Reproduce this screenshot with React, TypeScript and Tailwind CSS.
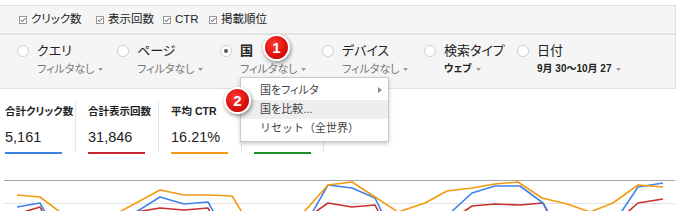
import React from 'react';

type Dim = { label: string; sub: string; width: string; selected?: boolean; strong?: boolean };

const DIMENSIONS: Dim[] = [
  { label: 'クエリ', sub: 'フィルタなし', width: 'w-[100px]' },
  { label: 'ページ', sub: 'フィルタなし', width: 'w-[103px]' },
  { label: '国', sub: 'フィルタなし', width: 'w-[102px]', selected: true },
  { label: 'デバイス', sub: 'フィルタなし', width: 'w-[102px]' },
  { label: '検索タイプ', sub: 'ウェブ', width: 'w-[93px]', strong: true },
  { label: '日付', sub: '9月 30～10月 27', width: 'w-[120px]', strong: true },
];

const METRICS = [
  { label: 'クリック数', width: 'w-[77px]' },
  { label: '表示回数', width: 'w-[67px]' },
  { label: 'CTR', width: 'w-[46px]' },
  { label: '掲載順位', width: '' },
];

// the 4th card sits under the open menu, so its texts are not drawn
const CARDS = [
  { title: '合計クリック数', value: '5,161', bar: 'bg-[#3e82e4]' },
  { title: '合計表示回数', value: '31,846', bar: 'bg-[#c5282f]' },
  { title: '平均 CTR', value: '16.21%', bar: 'bg-[#f29a10]' },
  { title: '', value: '', bar: 'bg-[#1b8d24]' },
];

// chart series, in page coordinates (viewBox starts at y=170)
const SERIES = [
  {
    stroke: '#c8312f',
    points: [
      [17, 214], [40, 207], [64, 250], [136, 212], [160, 208], [184, 210], [208, 208], [232, 250],
      [304, 220], [328, 203], [352, 207], [375, 205], [398, 250], [449, 222], [472, 206], [495, 204],
      [520, 205], [543, 203], [567, 250], [614, 224], [638, 203], [663, 199],
    ],
  },
  {
    stroke: '#3e84ea',
    points: [
      [17, 207], [40, 203], [64, 245], [136, 212], [160, 197], [184, 204], [208, 202], [232, 245],
      [304, 227], [328, 185], [352, 188], [375, 198], [398, 245], [449, 214], [472, 193], [495, 186],
      [520, 186], [543, 203], [567, 245], [614, 223], [638, 187], [663, 183],
    ],
  },
  {
    stroke: '#f29a10',
    points: [
      [17, 195], [40, 197], [64, 215], [88, 232], [112, 216], [160, 190], [184, 195], [208, 195],
      [232, 196], [256, 235], [304, 212], [328, 185], [352, 182], [375, 197], [398, 212], [425, 203],
      [447, 191], [472, 188], [495, 184], [518, 182], [542, 198], [567, 204], [590, 212], [613, 203],
      [638, 185], [663, 187],
    ],
  },
];

const Caret = () => (
  <svg width="5" height="3" viewBox="0 0 5 3" className="ml-[4px] mt-[1px]">
    <path d="M0 0h5L2.5 3z" fill="#9a9a9a" />
  </svg>
);

const CheckBox = () => (
  <svg width="8" height="8" viewBox="0 0 8 8" className="shrink-0">
    <rect x="0.5" y="0.5" width="7" height="7" fill="#fff" stroke="#999" />
    <path d="M1.8 4l1.5 1.5L6.4 2.2" fill="none" stroke="#444" strokeWidth="1" />
  </svg>
);

const Radio: React.FC<{ on?: boolean }> = ({ on }) => (
  <span className="mt-[2px] w-[12px] h-[12px] shrink-0 rounded-full border border-[#cfcfcf] bg-white flex items-center justify-center">
    {on && <span className="w-[4px] h-[4px] rounded-full bg-[#555]" />}
  </span>
);

const Badge: React.FC<{ n: string; className: string }> = ({ n, className }) => (
  <div
    className={`absolute w-[27px] h-[27px] rounded-full border-2 border-white bg-[radial-gradient(circle_at_40%_35%,#ff3b2f,#d90f0f_60%,#b80606)] shadow-[1px_2px_4px_rgba(0,0,0,0.45)] flex items-center justify-center text-white text-[15px] font-bold leading-none ${className}`}
  >
    {n}
  </div>
);

export default function App() {
  return (
    <div className="relative w-[680px] h-[211px] overflow-hidden bg-white text-[#222] font-['Liberation_Sans','Noto_Sans_CJK_JP',sans-serif] [font-feature-settings:'palt']">
      <div className="h-[5px]" />

      {/* filter panel */}
      <div className="w-[676px] bg-[#f5f5f5] border-t border-b border-r border-[#e0e0e0]">
        <div className="h-[27px] flex items-center pl-[19px]">
          {METRICS.map((m) => (
            <label
              key={m.label}
              className={`${m.width} flex items-center gap-[4px] whitespace-nowrap text-[11.5px] leading-none text-[#222]`}
            >
              <CheckBox />
              {m.label}
            </label>
          ))}
        </div>
        <div className="h-[2px] bg-[#e4e4e4]" />
        <div className="h-[53px] flex pl-[17px] pt-[8px]">
          {DIMENSIONS.map((d) => (
            <div key={d.label} className={`${d.width} flex items-start gap-[8px]`}>
              <Radio on={d.selected} />
              <div>
                <div className={`text-[13px] leading-[16px] ${d.selected ? 'font-bold' : ''}`}>{d.label}</div>
                <div
                  className={`mt-[3px] flex items-center whitespace-nowrap leading-[14px] ${
                    d.strong ? 'text-[10px] font-bold text-[#222]' : 'text-[11px] text-[#777]'
                  }`}
                >
                  {d.sub}
                  <Caret />
                </div>
              </div>
            </div>
          ))}
        </div>
      </div>

      {/* summary cards */}
      <div className="mt-[13px] h-[50px] flex">
        {CARDS.map((c, i) => (
          <div
            key={i}
            className={
              i === 0
                ? 'w-[75px] pl-[5px] pt-[2px]'
                : `w-[83px] pl-[12px] pt-[2px] border-l border-[#e6e6e6] ${i === CARDS.length - 1 ? 'border-r' : ''}`
            }
          >
            <div className="h-[14px] text-[10.5px] font-bold leading-[14px] whitespace-nowrap">{c.title}</div>
            <div className="mt-[10px] h-[18px] text-[14.5px] leading-[18px]">{c.value}</div>
            <div className={`mt-[6px] w-[57px] h-[2px] ${c.bar}`} />
          </div>
        ))}
      </div>

      {/* chart */}
      <svg className="mt-[18px] block" width="680" height="60" viewBox="0 170 680 60">
        <line x1="4" y1="180.5" x2="675" y2="180.5" stroke="#a6a6a6" strokeWidth="1" />
        <line x1="4" y1="203.5" x2="675" y2="203.5" stroke="#e3e3e3" strokeWidth="1" />
        {SERIES.map((s) => (
          <polyline
            key={s.stroke}
            points={s.points.map((p) => p.join(',')).join(' ')}
            fill="none"
            stroke={s.stroke}
            strokeWidth="1.6"
            strokeLinejoin="round"
          />
        ))}
      </svg>

      {/* country menu */}
      <div className="absolute left-[240px] top-[77px] w-[149px] bg-white border border-[#cacaca] shadow-[0_2px_4px_rgba(0,0,0,0.2)] pt-[2px] pb-[3px] text-[11px] text-[#444]">
        <div className="h-[20px] pl-[19px] pr-[6px] flex items-center justify-between">
          国をフィルタ
          <svg width="4" height="6" viewBox="0 0 4 6">
            <path d="M0 0l4 3-4 3z" fill="#888" />
          </svg>
        </div>
        <div className="h-[19px] pl-[19px] flex items-center bg-[#eeeeee]">国を比較...</div>
        <div className="h-[19px] pl-[19px] flex items-center [font-feature-settings:normal]">リセット（全世界）</div>
      </div>

      <Badge n="1" className="left-[263px] top-[34px]" />
      <Badge n="2" className="left-[224px] top-[87px]" />
    </div>
  );
}
